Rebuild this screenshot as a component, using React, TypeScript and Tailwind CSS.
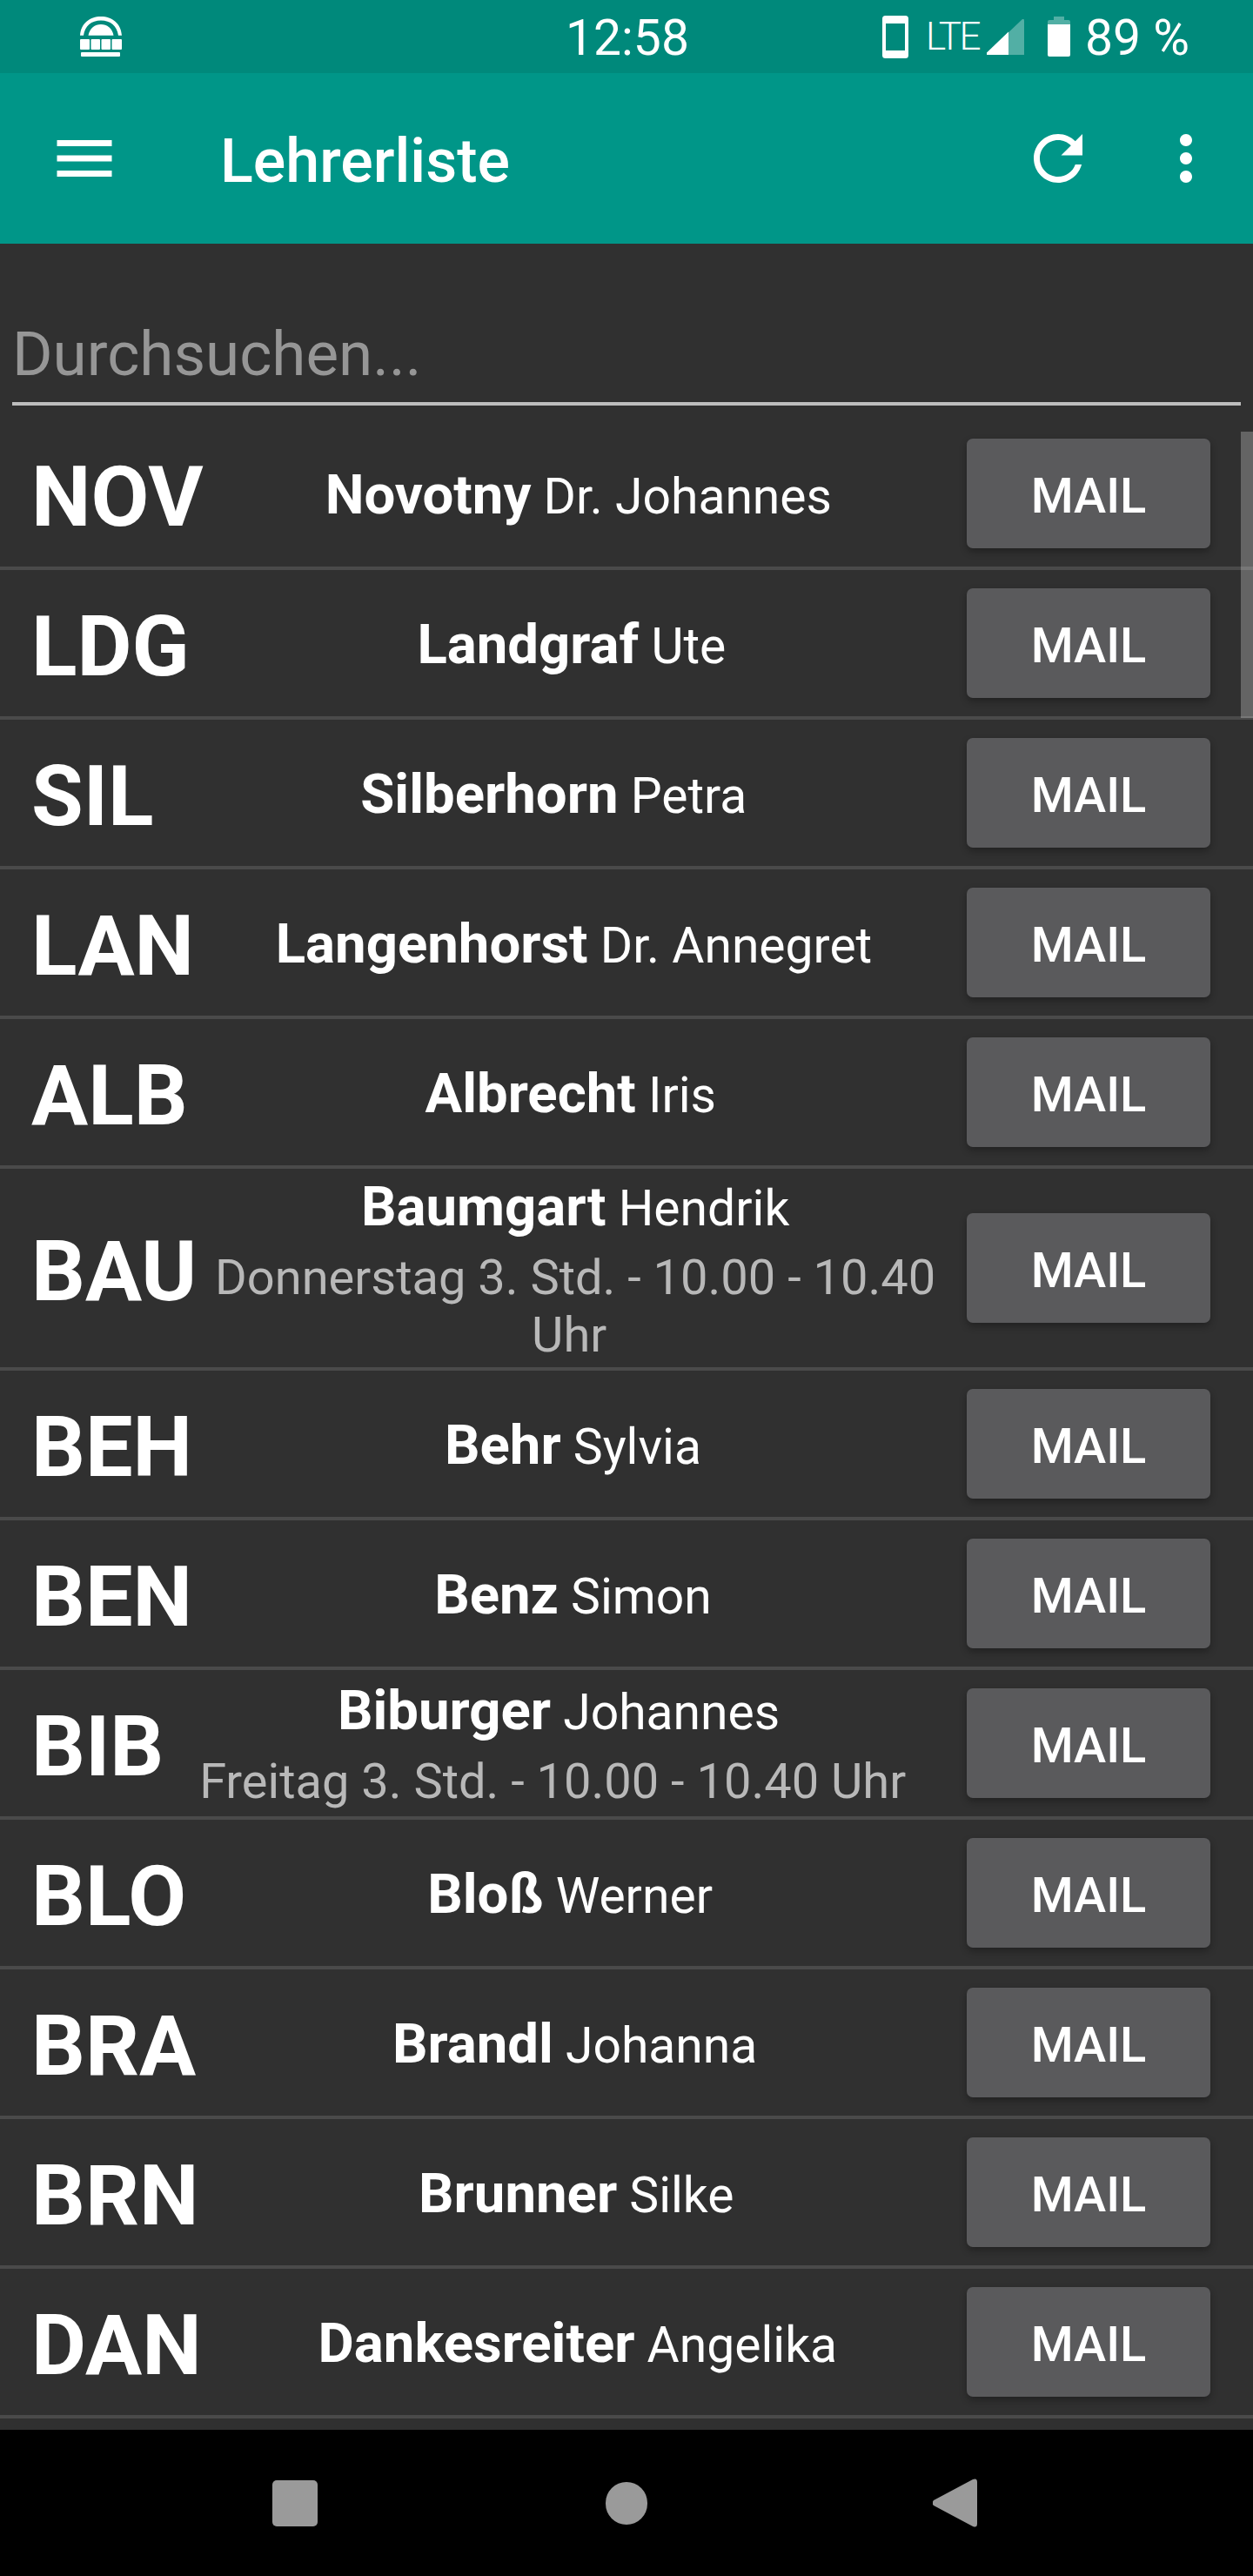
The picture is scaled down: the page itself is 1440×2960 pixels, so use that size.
const rows: { code: string; last: string; first: string; sub?: string }[] = [
  { code: "NOV", last: "Novotny", first: "Dr. Johannes" },
  { code: "LDG", last: "Landgraf", first: "Ute" },
  { code: "SIL", last: "Silberhorn", first: "Petra" },
  { code: "LAN", last: "Langenhorst", first: "Dr. Annegret" },
  { code: "ALB", last: "Albrecht", first: "Iris" },
  { code: "BAU", last: "Baumgart", first: "Hendrik", sub: "Donnerstag 3. Std. - 10.00 - 10.40 Uhr\u00a0" },
  { code: "BEH", last: "Behr", first: "Sylvia" },
  { code: "BEN", last: "Benz", first: "Simon" },
  { code: "BIB", last: "Biburger", first: "Johannes", sub: "Freitag 3. Std. - 10.00 - 10.40 Uhr\u00a0" },
  { code: "BLO", last: "Bloß", first: "Werner" },
  { code: "BRA", last: "Brandl", first: "Johanna" },
  { code: "BRN", last: "Brunner", first: "Silke" },
  { code: "DAN", last: "Dankesreiter", first: "Angelika" },
];

function Logo() {
  return (
    <svg width="48" height="46" viewBox="0 0 48 46" fill="white" className="block">
      <path d="M0 21.7 C1 8 11 0 24 0 C37 0 47 8 48 21.7 L44 21.7 C42.5 11 35 4.5 24 4.5 C13 4.5 5.5 11 4 21.7 Z" />
      <path d="M9.5 21.7 C11 13.5 17 9 24 9 C31 9 37 13.5 38.5 21.7 Z" />
      <rect x="0" y="26" width="11" height="12" rx="1" />
      <rect x="12.5" y="26" width="10.5" height="12" rx="1" />
      <rect x="24.5" y="26" width="10.5" height="12" rx="1" />
      <rect x="36.5" y="26" width="11.5" height="12" rx="1" />
      <rect x="1" y="41" width="45" height="5" rx="1" />
    </svg>
  );
}

function StatusBar() {
  return (
    <div className="relative flex h-[84px] shrink-0 items-center bg-[#00897b] text-white">
      <div className="ml-[92px]">
        <Logo />
      </div>
      <span className="ml-[510px] pt-[4px] text-[57px] leading-[84px] font-normal">12:58</span>
      <svg width="30" height="49" viewBox="0 0 30 49" className="ml-[222px] block" fill="none">
        <rect x="0" y="0" width="30" height="49" rx="3.5" fill="white" />
        <rect x="4" y="9" width="22" height="31" fill="#00897b" />
      </svg>
      <span className="ml-[20px] text-[44px] leading-[84px] font-light tracking-[-2.5px]">LTE</span>
      <svg width="43" height="41" viewBox="0 0 43 41" className="ml-[9px] block">
        <path d="M0 39 L41 0 Q43 -1 43 2 L43 41 L1 41 Q-1 41 0 39 Z" fill="white" fillOpacity="0.32" />
        <path d="M0 38.5 L25 14.5 L25 41 L1 41 Q-1 41 0 38.5 Z" fill="white" />
      </svg>
      <svg width="26" height="46" viewBox="0 0 26 46" className="ml-[27px] block">
        <path d="M7 0 H19 V4 H24 Q26 4 26 6 V9 H0 V6 Q0 4 2 4 H7 Z" fill="white" fillOpacity="0.32" />
        <path d="M0 9 H26 V44 Q26 46 24 46 H2 Q0 46 0 44 Z" fill="white" />
      </svg>
      <span className="ml-[17px] pt-[3px] text-[57px] leading-[84px] font-normal whitespace-nowrap">89 %</span>
    </div>
  );
}

function AppBar() {
  return (
    <div className="flex h-[196px] shrink-0 items-center bg-[#009688] text-white">
      <svg width="84" height="84" viewBox="0 0 24 24" fill="white" className="ml-[55px] block">
        <path d="M3 18h18v-2H3v2zm0-5h18v-2H3v2zm0-7v2h18V6H3z" />
      </svg>
      <h1 className="ml-[114px] flex-1 pt-[5px] text-[70px] leading-[82px] font-medium">Lehrerliste</h1>
      <svg width="84" height="84" viewBox="0 0 24 24" fill="white" className="block">
        <path d="M17.65 6.35C16.2 4.9 14.21 4 12 4c-4.42 0-7.99 3.58-7.99 8s3.57 8 7.99 8c3.73 0 6.84-2.55 7.73-6h-2.08c-.82 2.33-3.04 4-5.65 4-3.31 0-6-2.69-6-6s2.69-6 6-6c1.66 0 3.14.69 4.22 1.78L13 11h7V4l-2.35 2.35z" />
      </svg>
      <svg width="84" height="84" viewBox="0 0 24 24" fill="white" className="ml-[63px] mr-[35px] block">
        <path d="M12 8c1.1 0 2-.9 2-2s-.9-2-2-2-2 .9-2 2 .9 2 2 2zm0 2c-1.1 0-2 .9-2 2s.9 2 2 2 2-.9 2-2-.9-2-2-2zm0 6c-1.1 0-2 .9-2 2s.9 2 2 2 2-.9 2-2-.9-2-2-2z" />
      </svg>
    </div>
  );
}

function Row({ code, last, first, sub }: { code: string; last: string; first: string; sub?: string }) {
  return (
    <div className="flex min-h-[172px] items-center border-b-4 border-[#4a4a4a] py-[4px] pl-[36px] pr-[49px]">
      <div className="shrink-0 pt-[8px] text-[97px] leading-[112px] font-bold text-white">{code}</div>
      <div className={sub ? "mr-[15px] min-w-0 flex-1 pt-[3px] text-center" : "mr-[15px] min-w-0 flex-1 pt-[4px] text-center"}>
        <div className="h-[74px] text-[57px] leading-[74px] text-white">
          <span className="text-[63.5px] font-bold">{last}</span> {first}
        </div>
        {sub && <div className="mt-[11px] text-[56px] leading-[66px] text-[#b8b8b8]">{sub}</div>}
      </div>
      <div className="flex h-[126px] w-[280px] shrink-0 items-center justify-center rounded-[7px] bg-[#5a5a5c] pt-[5px] text-[56px] font-medium text-white shadow-[0_4px_8px_rgba(0,0,0,0.3)]">
        MAIL
      </div>
    </div>
  );
}

function NavBar() {
  return (
    <div className="flex h-[168px] shrink-0 items-center bg-black">
      <div className="ml-[313px] h-[53px] w-[52px] rounded-[5px] bg-[#9a9a9a]" />
      <div className="ml-[331px] mt-[1px] h-[49px] w-[48px] rounded-full bg-[#9a9a9a]" />
      <svg width="51" height="56" viewBox="0 0 51 56" className="ml-[328px] block">
        <path d="M1 25 L46 1 Q51 -1 51 4 L51 52 Q51 57 46 55 L1 31 Q-2 28 1 25 Z" fill="#9a9a9a" />
      </svg>
    </div>
  );
}

export default function App() {
  return (
    <div className="relative flex h-[2960px] w-full flex-col overflow-hidden bg-[#303030] font-['Roboto',sans-serif]">
      <StatusBar />
      <AppBar />
      <div className="flex min-h-0 flex-1 flex-col">
        <div className="mx-[14px] mb-[17px] border-b-4 border-[#bdbdbd] pb-[14px] pt-[86px] text-[71px] leading-[82px] text-[#969696]">
          Durchsuchen...
        </div>
        <div>
          {rows.map((r) => (
            <Row key={r.code} {...r} />
          ))}
        </div>
      </div>
      <NavBar />
      <div className="absolute right-0 top-[496px] h-[329px] w-[14px] bg-white/25" />
    </div>
  );
}
